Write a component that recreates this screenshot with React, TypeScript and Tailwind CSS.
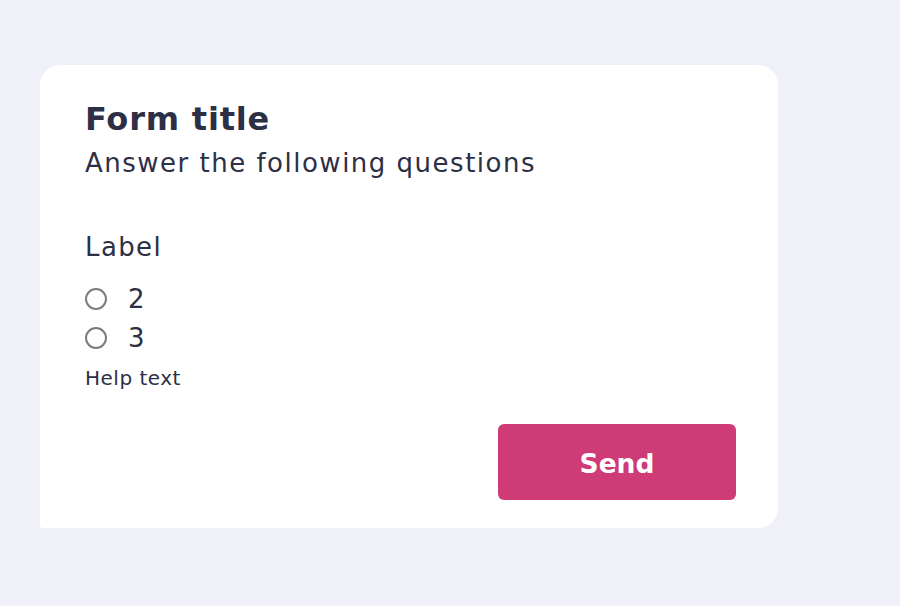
export default function App() {
  const font = { fontFamily: '"DejaVu Sans", "Open Sans", sans-serif' };
  const options = ["2", "3"];

  return (
    <div className="min-h-[606px] w-[900px] bg-[#f0f0f8] pt-[65px] pl-[40px]" style={font}>
      <div className="flex w-[738px] h-[463px] flex-col rounded-tl-[20px] rounded-tr-[20px] rounded-br-[20px] rounded-bl-[3px] bg-white pl-[45px] pr-[42px] pt-[34px] text-[#2d2f45]">
        <h1 className="text-[32px] leading-[40px] font-bold tracking-[0.8px]">Form title</h1>
        <p className="mt-[7px] text-[26px] leading-[34px] tracking-[1.5px]">Answer the following questions</p>

        <div className="mt-[50px] text-[26px] leading-[34px] tracking-[1.4px]">Label</div>

        <div className="mt-[15px] flex flex-col">
          {options.map((o) => (
            <label key={o} className="flex h-[39px] items-center">
              <span className="h-[22px] w-[22px] rounded-full border-2 border-[#7b7b80]" />
              <span className="ml-[21px] text-[26px] leading-[34px]">{o}</span>
            </label>
          ))}
        </div>

        <div className="mt-[7px] text-[20px] leading-[28px] tracking-[0.5px]">Help text</div>

        <div className="mt-[32px] flex justify-end">
          <button className="h-[76px] w-[238px] rounded-[6px] bg-[#cf3b76] pt-[3px] text-[26.5px] font-bold text-white">
            Send
          </button>
        </div>
      </div>
    </div>
  );
}
